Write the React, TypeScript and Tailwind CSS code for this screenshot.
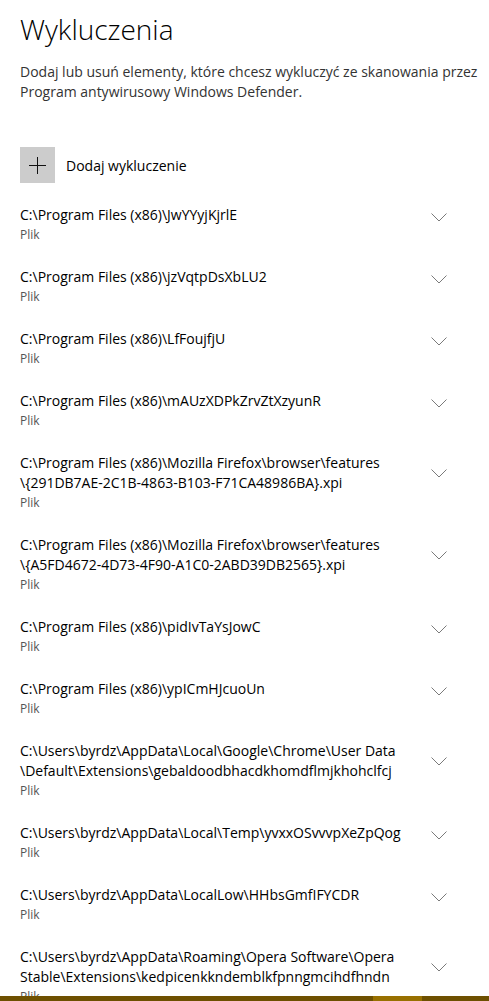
import React from 'react'

const items: string[][] = [
    ['C:\\Program Files (x86)\\JwYYyjKjrlE'],
    ['C:\\Program Files (x86)\\jzVqtpDsXbLU2'],
    ['C:\\Program Files (x86)\\LfFoujfjU'],
    ['C:\\Program Files (x86)\\mAUzXDPkZrvZtXzyunR'],
    ['C:\\Program Files (x86)\\Mozilla Firefox\\browser\\features', '\\{291DB7AE-2C1B-4863-B103-F71CA48986BA}.xpi'],
    ['C:\\Program Files (x86)\\Mozilla Firefox\\browser\\features', '\\{A5FD4672-4D73-4F90-A1C0-2ABD39DB2565}.xpi'],
    ['C:\\Program Files (x86)\\pidIvTaYsJowC'],
    ['C:\\Program Files (x86)\\ypICmHJcuoUn'],
    ['C:\\Users\\byrdz\\AppData\\Local\\Google\\Chrome\\User Data', '\\Default\\Extensions\\gebaldoodbhacdkhomdflmjkhohclfcj'],
    ['C:\\Users\\byrdz\\AppData\\Local\\Temp\\yvxxOSvvvpXeZpQog'],
    ['C:\\Users\\byrdz\\AppData\\LocalLow\\HHbsGmfIFYCDR'],
    ['C:\\Users\\byrdz\\AppData\\Roaming\\Opera Software\\Opera', 'Stable\\Extensions\\kedpicenkkndemblkfpnngmcihdfhndn'],
]

const Chevron = () => (
    <svg width="16" height="9" viewBox="0 0 16 9" className="shrink-0">
        <path d="M0.5 0.5 L8 8 L15.5 0.5" fill="none" stroke="#7a7a7a" strokeWidth="1" />
    </svg>
)

const App = () => {
    return (
        <div className="h-[1001px] flex flex-col overflow-hidden bg-white font-['Open_Sans',sans-serif] text-black">
            <div className="flex-1 overflow-hidden pl-5 pr-[6px]">
                <h1 className="text-[28px] font-light leading-[36px] mt-[11px]">Wykluczenia</h1>
                <p className="text-[14px] leading-[20px] text-[#333] mt-[15px]">
                    Dodaj lub usuń elementy, które chcesz wykluczyć ze skanowania przez Program antywirusowy Windows Defender.
                </p>
                <div className="flex items-center gap-[11px] mt-[45px]">
                    <div className="w-[35px] h-[36px] bg-[#cccccc] flex items-center justify-center">
                        <svg width="17" height="17" viewBox="0 0 17 17">
                            <path d="M8.5 0 V17 M0 8.5 H17" stroke="#111" strokeWidth="1" />
                        </svg>
                    </div>
                    <span className="text-[14px]">Dodaj wykluczenie</span>
                </div>
                <div className="flex flex-col gap-[22px] mt-[22px]">
                    {items.map((lines, i) => (
                        <div key={i} className="flex items-start">
                            <div className="flex-1">
                                {lines.map((l, j) => (
                                    <div key={j} className="text-[14px] leading-[20px] whitespace-nowrap">{l}</div>
                                ))}
                                <div className="text-[12px] leading-[20px] text-[#555]">Plik</div>
                            </div>
                            <div className={lines.length > 1 ? 'mt-[16px] mr-[36px]' : 'mt-[8px] mr-[36px]'}>
                                <Chevron />
                            </div>
                        </div>
                    ))}
                </div>
            </div>
            <div className="h-[5px] flex shrink-0">
                <div className="w-[373px] bg-[#6e5000]" />
                <div className="w-[49px] bg-[#987000]" />
                <div className="flex-1 bg-[#6e5000]" />
            </div>
        </div>
    )
}

export default App
